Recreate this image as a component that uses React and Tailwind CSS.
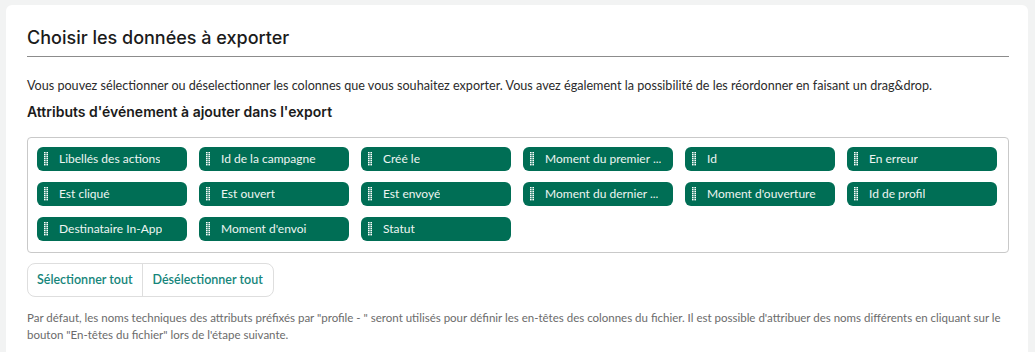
const attributes = [
  "Libellés des actions",
  "Id de la campagne",
  "Créé le",
  "Moment du premier ...",
  "Id",
  "En erreur",
  "Est cliqué",
  "Est ouvert",
  "Est envoyé",
  "Moment du dernier ...",
  "Moment d'ouverture",
  "Id de profil",
  "Destinataire In-App",
  "Moment d'envoi",
  "Statut",
];

function Grip() {
  const rows = [0, 1, 2, 3, 4, 5, 6];
  return (
    <svg width="4" height="14" viewBox="0 0 4 14" className="shrink-0">
      {rows.map((r) => (
        <g key={r} fill="#ffffff">
          <rect x="0" y={r * 2} width="1.6" height="1.4" />
          <rect x="2.4" y={r * 2} width="1.6" height="1.4" />
        </g>
      ))}
    </svg>
  );
}

function Chip({ label }) {
  return (
    <div className="flex h-6 items-center rounded-md bg-[#006e55] pl-[7px] pr-2">
      <Grip />
      <span className="ml-[11px] truncate text-[12px] text-[#eef5f2]">{label}</span>
    </div>
  );
}

export default function App() {
  return (
    <div className="min-h-screen bg-[#f2f3f3] pl-[6px] pr-[7px] pt-[5px] font-['Lato',sans-serif]">
      <div className="rounded-t-md bg-white pl-[21px] pr-[19px] pt-[22px] pb-6">
        <h1 className="border-b border-[#8c8c8c] pb-[7px] font-['Inter',sans-serif] text-[18px] font-medium leading-[22px] text-[#1b1b1b]">
          Choisir les données à exporter
        </h1>

        <p className="mt-[20px] text-[12.6px] leading-[18px] text-[#2b2b2b]">
          Vous pouvez sélectionner ou déselectionner les colonnes que vous souhaitez exporter. Vous avez également la possibilité de les réordonner en faisant un drag&amp;drop.
        </p>

        <h2 className="mt-[8px] font-['Inter',sans-serif] text-[14px] font-semibold leading-[18px] text-[#1b1b1b]">
          Attributs d'événement à ajouter dans l'export
        </h2>

        <div className="mt-[16px] grid grid-cols-6 gap-x-3 gap-y-[11px] rounded border border-[#c9c9c9] pb-[11px] pl-[9px] pr-[11px] pt-[9px]">
          {attributes.map((a) => (
            <Chip key={a} label={a} />
          ))}
        </div>

        <div className="mt-[10px] inline-flex h-[34px] rounded-lg border border-[#dedede]">
          <button className="px-[9px] text-[12.5px] font-semibold text-[#15857a]">Sélectionner tout</button>
          <button className="border-l border-[#dedede] px-[10px] text-[12.5px] font-semibold text-[#15857a]">
            Désélectionner tout
          </button>
        </div>

        <p className="mt-[12px] text-[11.5px] leading-[17px] text-[#6b6b6b]">
          Par défaut, les noms techniques des attributs préfixés par "profile - " seront utilisés pour définir les en-têtes des colonnes du fichier. Il est possible d'attribuer des noms différents en cliquant sur le bouton "En-têtes du fichier" lors de l'étape suivante.
        </p>
      </div>
    </div>
  );
}
